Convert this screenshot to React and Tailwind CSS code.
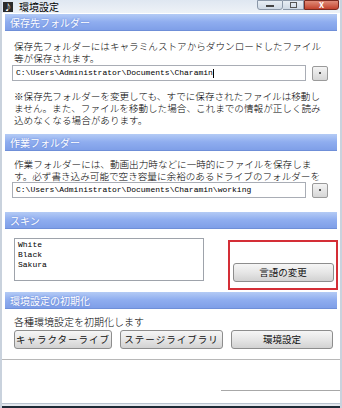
import React from 'react';

const jp = { fontFamily: '"Noto Sans CJK JP", "Noto Sans", sans-serif' };
const mono = { fontFamily: '"Liberation Mono", "Noto Sans CJK JP", monospace' };

function Header({ children }) {
  return (
    <div className="h-[17px] mx-[3px] flex items-center pl-[5px] text-[10px] text-white bg-gradient-to-b from-[#b4cbf5] via-[#8fadef] to-[#7f9fe8] border-b border-[#6f8fd8]" style={{ ...jp, textShadow: '0 0 2px #5a7ad0' }}>
      {children}
    </div>
  );
}

function Btn({ children, className = '' }) {
  return (
    <button className={`h-[19px] rounded-[3px] border border-[#8d8d8d] bg-gradient-to-b from-[#f6f6f6] via-[#e6e6e6] to-[#d2d2d2] text-[9.5px] text-[#111] flex items-center justify-center ${className}`} style={jp}>
      {children}
    </button>
  );
}

function PathRow({ value }) {
  return (
    <div className="flex items-center ml-[10px] mr-[12px] gap-[6px]">
      <div className="flex-1 h-[16px] border border-[#a9adb5] bg-white flex items-center pl-[3px] text-[8px] text-black whitespace-nowrap overflow-hidden" style={mono}>
        {value}
      </div>
      <div className="w-[16px] h-[15px] rounded-[2px] border border-[#9a9a9a] bg-gradient-to-b from-[#f4f4f4] to-[#d6d6d6] flex items-center justify-center">
        <div className="w-[2px] h-[2px] bg-[#555]" />
      </div>
    </div>
  );
}

export default function App() {
  return (
    <div className="w-[342px] h-[408px] bg-white overflow-hidden flex flex-col relative border-x-2 border-[#c9d2dd]" style={jp}>
      {/* title bar */}
      <div className="h-[13px] bg-gradient-to-b from-[#dfe7f1] to-[#eef2f7] flex items-center pl-[1px] relative">
        <div className="w-[10px] h-[10px] bg-[#2b2b2b] flex items-center justify-center text-[8px] leading-none text-white">♪</div>
        <span className="ml-[6px] text-[10px] text-black leading-[12px]">環境設定</span>
        <div className="absolute right-[1px] top-0 flex">
          <div className="w-[26px] h-[10px] border border-[#8a97a8] rounded-b-[3px] bg-gradient-to-b from-[#e7edf4] to-[#cfd9e5] flex items-center justify-center">
            <div className="w-[8px] h-[2px] bg-[#444] mt-[2px]" />
          </div>
          <div className="w-[21px] h-[10px] border border-[#8a97a8] border-l-0 bg-gradient-to-b from-[#e7edf4] to-[#cfd9e5] flex items-center justify-center">
            <div className="w-[7px] h-[6px] border border-[#555]" />
          </div>
          <div className="w-[35px] h-[10px] border border-[#7a2a20] rounded-br-[3px] bg-gradient-to-b from-[#e08b78] to-[#c2412c] flex items-center justify-center text-white text-[8px] font-bold leading-none">
            X
          </div>
        </div>
      </div>

      <div className="h-[1px]" />
      <Header>保存先フォルダー</Header>
      <div className="mt-[9px] ml-[12px] text-[9.6px] leading-[12px] text-black font-light whitespace-nowrap">
        <div>保存先フォルダーにはキャラミんストアからダウンロードしたファイル</div>
        <div>等が保存されます。</div>
      </div>
      <div className="mt-[1px]">
        <PathRow value={<>C:\Users\Administrator\Documents\Charamin<span className="inline-block w-px h-[9px] bg-black align-middle" /></>} />
      </div>
      <div className="mt-[9px] ml-[12px] text-[9.6px] leading-[12px] text-black font-light whitespace-nowrap">
        <div>※保存先フォルダーを変更しても、すでに保存されたファイルは移動し</div>
        <div>ません。また、ファイルを移動した場合、これまでの情報が正しく読み</div>
        <div>込めなくなる場合があります。</div>
      </div>

      <div className="h-[8px]" />
      <Header>作業フォルダー</Header>
      <div className="mt-[7px] ml-[12px] text-[9.6px] leading-[12px] text-black font-light whitespace-nowrap">
        <div>作業フォルダーには、動画出力時などに一時的にファイルを保存しま</div>
        <div>す。必ず書き込み可能で空き容量に余裕のあるドライブのフォルダーを</div>
      </div>
      <div className="mt-[0px]">
        <PathRow value="C:\Users\Administrator\Documents\Charamin\working" />
      </div>

      <div className="h-[14px]" />
      <Header>スキン</Header>
      <div className="flex mt-[9px]">
        <div className="ml-[12px] w-[190px] h-[43px] border border-[#9ea3ab] bg-white pl-[3px] pt-[1px] text-[8px] leading-[10px] text-black" style={mono}>
          <div>White</div>
          <div>Black</div>
          <div>Sakura</div>
        </div>
        <div className="ml-[24px] w-[110px] h-[50px] mt-[2px] border-2 border-[#d42e36] flex items-end justify-center pb-[6px]">
          <Btn className="w-[101px]">言語の変更</Btn>
        </div>
      </div>

      <div className="h-[2px]" />
      <Header>環境設定の初期化</Header>
      <div className="mt-[7px] ml-[12px] text-[10px] leading-[12px] text-black font-light">各種環境設定を初期化します</div>
      <div className="flex mt-[2px] ml-[12px] gap-[8px]">
        <Btn className="w-[98px] tracking-[1px]">キャラクターライブ</Btn>
        <Btn className="w-[103px] tracking-[1px]">ステージライブラリ</Btn>
        <Btn className="w-[102px]">環境設定</Btn>
      </div>

      <div className="mt-[10px] h-px bg-[#b8b8b8]" />
      <div className="flex-1 relative">
        <div className="absolute left-[219px] right-0 bottom-[12px] h-px bg-[#a8a8a8]" />
      </div>
      <div className="h-[3px] bg-[#e4e8ee] border-t border-[#b9c3cf]" />
      <div className="h-[2px] bg-[#1e2a36]" />
    </div>
  );
}
